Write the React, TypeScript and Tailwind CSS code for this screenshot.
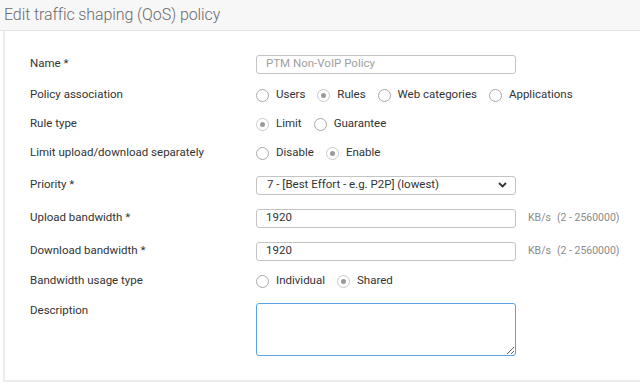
import React from 'react';

const Radio = ({ label, checked = false }: { label: string; checked?: boolean }) => (
  <label className="flex items-center gap-[7px] mr-[12px]">
    <span
      className={
        checked
          ? 'flex items-center justify-center w-[13px] h-[13px] rounded-full border border-[#c8c8c8] bg-white'
          : 'flex items-center justify-center w-[13px] h-[13px] rounded-full border border-[#a9a9a9] bg-white'
      }
    >
      {checked && <span className="w-[5px] h-[5px] rounded-full bg-[#9a9a9a]" />}
    </span>
    <span className="text-[#333]">{label}</span>
  </label>
);

const Row = ({ label, h, children }: { label: string; h: string; children: React.ReactNode }) => (
  <div className={`flex items-center ${h}`}>
    <div className="w-[226px] text-[#333]">{label}</div>
    <div className="flex items-center">{children}</div>
  </div>
);

const inputCls =
  'w-[260px] h-[19px] border border-[#c4c4c4] rounded-[3px] px-[9px] text-[11.5px] text-[#333] bg-white flex items-center';

const Units = () => (
  <span className="ml-[12px] text-[10.5px] text-[#8a8a8a] flex gap-[6px]">
    <span>KB/s</span>
    <span>(2 - 2560000)</span>
  </span>
);

const App = () => {
  return (
    <div className="w-[640px] h-[384px] bg-white overflow-hidden text-[11.5px]" style={{ fontFamily: 'Roboto, "Liberation Sans", sans-serif' }}>
      <div className="h-[31px] bg-[#f7f7f7] border-b border-[#e2e2e2] pl-[4px] pt-[3px]">
        <h1 className="text-[16px] font-light text-[#6b6b6b] leading-[24px] tracking-[-0.1px]">Edit traffic shaping (QoS) policy</h1>
      </div>
      <div className="ml-[3px] h-[351px] border-l-2 border-b-2 border-[#ececec] bg-white pl-[25px] pt-[18px]">
        <Row label="Name *" h="h-[30px]">
          <div className={inputCls}>
            <span className="text-[#a0a0a0]">PTM Non-VoIP Policy</span>
          </div>
        </Row>
        <Row label="Policy association" h="h-[32px]">
          <Radio label="Users" />
          <Radio label="Rules" checked />
          <Radio label="Web categories" />
          <Radio label="Applications" />
        </Row>
        <Row label="Rule type" h="h-[26px]">
          <Radio label="Limit" checked />
          <Radio label="Guarantee" />
        </Row>
        <Row label="Limit upload/download separately" h="h-[32px]">
          <Radio label="Disable" />
          <Radio label="Enable" checked />
        </Row>
        <Row label="Priority *" h="h-[32px]">
          <div className={`${inputCls} justify-between`}>
            <span className="pl-[1px]">7 - [Best Effort - e.g. P2P] (lowest)</span>
            <svg width="9" height="6" viewBox="0 0 9 6" className="mr-[-1px]">
              <path d="M1 1 L4.5 4.5 L8 1" fill="none" stroke="#333" strokeWidth="1.8" />
            </svg>
          </div>
        </Row>
        <Row label="Upload bandwidth *" h="h-[34px]">
          <div className={inputCls}>1920</div>
          <Units />
        </Row>
        <Row label="Download bandwidth *" h="h-[32px]">
          <div className={inputCls}>1920</div>
          <Units />
        </Row>
        <Row label="Bandwidth usage type" h="h-[28px]">
          <Radio label="Individual" />
          <Radio label="Shared" checked />
        </Row>
        <div className="flex items-start mt-[8px]">
          <div className="w-[226px] text-[#333] mt-[-1px]">Description</div>
          <textarea className="w-[260px] h-[53px] border border-[#5aa3e0] rounded-[3px] outline-none resize-y" />
        </div>
      </div>
    </div>
  );
};

export default App;
